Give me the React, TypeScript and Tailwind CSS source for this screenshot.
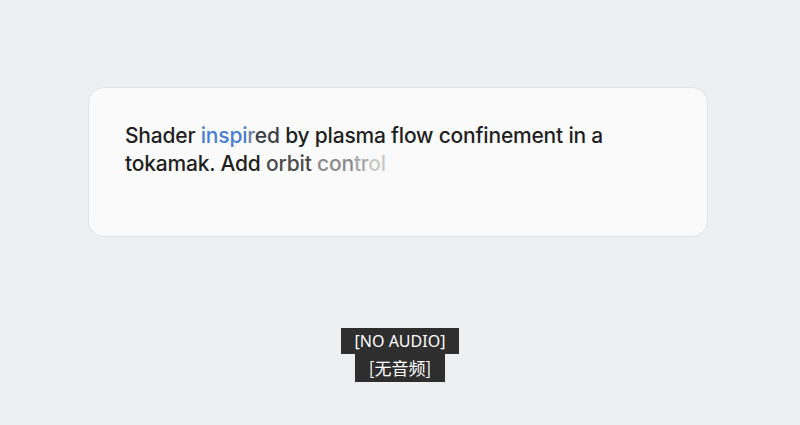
import React from "react";

export default function App() {
  return (
    <div className="w-[800px] h-[425px] bg-[#eeeff0] flex flex-col items-center" style={{ fontFamily: "Inter, 'Noto Sans', sans-serif" }}>
      <div className="mt-[87px] self-start ml-[88px] w-[620px] h-[150px] rounded-[16px] bg-[#fafafa] border border-[#e2e3e4] pl-[36px] pt-[34px]">
        <p className="text-[21px] font-medium leading-[28px] text-[#1f1f1f] tracking-[-0.2px]">
          Shader{" "}
          <span className="text-[#4a7fd0]">inspi</span>
          <span className="text-[#6f7fa0]">r</span>
          <span className="text-[#3a3f48]">ed</span> by plasma flow confinement in a
          <br />
          tokamak. Add <span className="text-[#4a4a4a]">orbit</span>{" "}
          <span className="text-[#8a8a8a]">con</span>
          <span className="text-[#a6a6a6]">tr</span>
          <span className="text-[#c8c8c8]">ol</span>
        </p>
      </div>
      <div className="mt-[91px] flex flex-col items-center text-white" style={{ fontFamily: "'Noto Sans', 'Noto Sans CJK SC', sans-serif" }}>
        <div className="bg-[#2e2e2e] px-[14px] text-[16px] leading-[26px]">[NO AUDIO]</div>
        <div className="bg-[#2e2e2e] px-[14px] text-[17px] leading-[28px]" style={{ fontFamily: "'Noto Sans CJK SC', sans-serif" }}>[无音频]</div>
      </div>
    </div>
  );
}
